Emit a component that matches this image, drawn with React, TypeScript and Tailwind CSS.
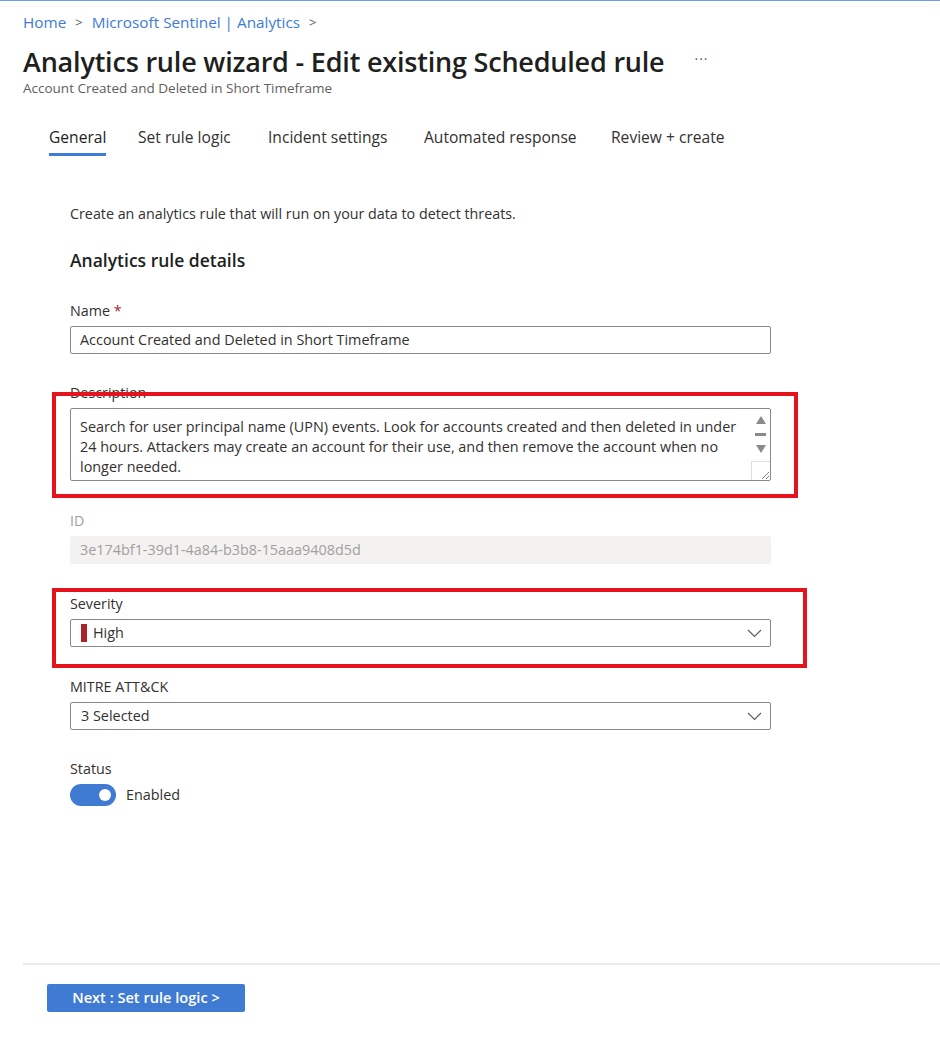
import React from 'react';

const font = { fontFamily: '"Open Sans", "Noto Sans", sans-serif' };

const Chevron: React.FC = () => (
  <svg width="15" height="9" viewBox="0 0 15 9" fill="none" className="shrink-0">
    <path d="M1 1l6.5 6.5L14 1" stroke="#605e5c" strokeWidth="1.2" />
  </svg>
);

const Label: React.FC<{ children: React.ReactNode; muted?: boolean }> = ({ children, muted }) => (
  <div className={`h-[20px] text-[14.3px] leading-[20px] ${muted ? 'text-[#a19f9d]' : 'text-[#323130]'}`}>
    {children}
  </div>
);

const tabs = [
  { label: 'General', w: 'w-[89px]', active: true },
  { label: 'Set rule logic', w: 'w-[130px]', active: false },
  { label: 'Incident settings', w: 'w-[156px]', active: false },
  { label: 'Automated response', w: 'w-[187px]', active: false },
  { label: 'Review + create', w: 'w-[130px]', active: false },
];

const App: React.FC = () => {
  return (
    <div className="w-[940px] h-[1060px] bg-white text-[#323130] overflow-hidden" style={font}>
      <div className="h-px bg-[#6f9fe0]" />

      {/* header */}
      <div className="pl-[23px]">
        <div className="mt-[11px] flex items-center h-[20px] text-[15.3px] leading-[20px] text-[#3e7bd6]">
          <span>Home</span>
          <span className="mx-[9px] text-[#605e5c] text-[13px]">&gt;</span>
          <span>Microsoft Sentinel | Analytics</span>
          <span className="mx-[9px] text-[#605e5c] text-[13px]">&gt;</span>
        </div>
        <div className="mt-[12px] flex items-center h-[36px]">
          <h1 className="text-[27px] leading-[36px] font-semibold text-[#201f1e] tracking-[-0.2px]">
            Analytics rule wizard - Edit existing Scheduled rule
          </h1>
          <span className="ml-[30px] text-[14px] text-[#605e5c] tracking-[1px] -mt-[8px]">···</span>
        </div>
        <div className="h-[16px] text-[13.5px] leading-[16px] text-[#605e5c]">
          Account Created and Deleted in Short Timeframe
        </div>
      </div>

      {/* tabs */}
      <div className="mt-[29px] ml-[49px] flex">
        {tabs.map((t) => (
          <div key={t.label} className={`${t.w} shrink-0`}>
            <div className={`inline-block text-[15.6px] leading-[22px] whitespace-nowrap ${t.active ? 'text-[#201f1e]' : 'text-[#323130]'}`}>
              {t.label}
              <div className={`mt-[5px] h-[3px] ${t.active ? 'bg-[#3e7bd6]' : 'bg-transparent'}`} />
            </div>
          </div>
        ))}
      </div>

      {/* form */}
      <div className="ml-[70px] w-[701px]">
        <div className="mt-[48px] h-[20px] text-[14.3px] leading-[20px]">
          Create an analytics rule that will run on your data to detect threats.
        </div>
        <div className="mt-[24px] h-[24px] text-[17.5px] leading-[24px] font-semibold text-[#201f1e]">
          Analytics rule details
        </div>

        {/* Name */}
        <div className="mt-[29px]">
          <Label>
            Name <span className="text-[#a4262c]">*</span>
          </Label>
          <div className="mt-[5px] h-[28px] border border-[#8a8886] rounded-[2px] px-[9px] flex items-center text-[14.4px]">
            Account Created and Deleted in Short Timeframe
          </div>
        </div>

        {/* Description */}
        <div className="mt-[29px] relative">
          <Label>Description</Label>
          <div className="mt-[5px] h-[73px] border border-[#8a8886] rounded-[2px] flex">
            <div className="flex-1 pl-[9px] pr-[8px] pt-[8px] text-[14.4px] leading-[20px]">
              Search for user principal name (UPN) events. Look for accounts created and then deleted in under 24 hours. Attackers may create an account for their use, and then remove the account when no longer needed.
            </div>
            <div className="w-[19px] flex flex-col items-center">
              <svg width="12" height="10" viewBox="0 0 12 10" className="mt-[6px] shrink-0">
                <path d="M6 1L11 9H1z" fill="#8a8a8a" />
              </svg>
              <div className="mt-[8px] w-[11px] h-[3px] bg-[#8a8a8a] shrink-0" />
              <svg width="12" height="10" viewBox="0 0 12 10" className="mt-[8px] shrink-0">
                <path d="M1 1h10L6 9z" fill="#8a8a8a" />
              </svg>
              <div className="mt-auto w-[19px] h-[19px] border-l border-t border-[#e1dfdd] flex items-end justify-end shrink-0">
                <svg width="10" height="10" viewBox="0 0 10 10">
                  <path d="M9 2L2 9M9 6L6 9" stroke="#808080" strokeWidth="1" />
                </svg>
              </div>
            </div>
          </div>
          <div className="absolute -left-[18px] top-[9px] w-[746px] h-[106px] border-[4px] border-[#e5131d] pointer-events-none" />
        </div>

        {/* ID */}
        <div className="mt-[30px]">
          <Label muted>ID</Label>
          <div className="mt-[5px] h-[28px] bg-[#f3f2f1] rounded-[2px] px-[10px] flex items-center text-[14.4px] text-[#a19f9d]">
            3e174bf1-39d1-4a84-b3b8-15aaa9408d5d
          </div>
        </div>

        {/* Severity */}
        <div className="mt-[30px] relative">
          <Label>Severity</Label>
          <div className="mt-[5px] h-[28px] border border-[#8a8886] rounded-[2px] pl-[10px] pr-[8px] flex items-center text-[14.4px]">
            <div className="w-[6px] h-[18px] bg-[#a4262c]" />
            <span className="ml-[6px] flex-1">High</span>
            <Chevron />
          </div>
          <div className="absolute -left-[18px] -top-[6px] w-[755px] h-[80px] border-[4px] border-[#e5131d] pointer-events-none" />
        </div>

        {/* MITRE */}
        <div className="mt-[30px]">
          <Label>MITRE ATT&amp;CK</Label>
          <div className="mt-[5px] h-[28px] border border-[#8a8886] rounded-[2px] pl-[10px] pr-[8px] flex items-center text-[14.4px]">
            <span className="flex-1">3 Selected</span>
            <Chevron />
          </div>
        </div>

        {/* Status */}
        <div className="mt-[29px]">
          <Label>Status</Label>
          <div className="mt-[5px] flex items-center">
            <div className="w-[46px] h-[22px] rounded-full bg-[#3f7ad3] flex items-center justify-end pr-[5px]">
              <div className="w-[12px] h-[12px] rounded-full bg-white" />
            </div>
            <span className="ml-[10px] text-[14.4px] leading-[20px]">Enabled</span>
          </div>
        </div>
      </div>

      {/* footer */}
      <div className="mt-[157px] ml-[23px] h-[2px] bg-[#edebe9]" />
      <div className="mt-[19px] ml-[47px]">
        <button className="w-[198px] h-[28px] bg-[#3f7ad3] rounded-[2px] text-white text-[14.6px] font-semibold">
          Next : Set rule logic &gt;
        </button>
      </div>
    </div>
  );
};

export default App;
